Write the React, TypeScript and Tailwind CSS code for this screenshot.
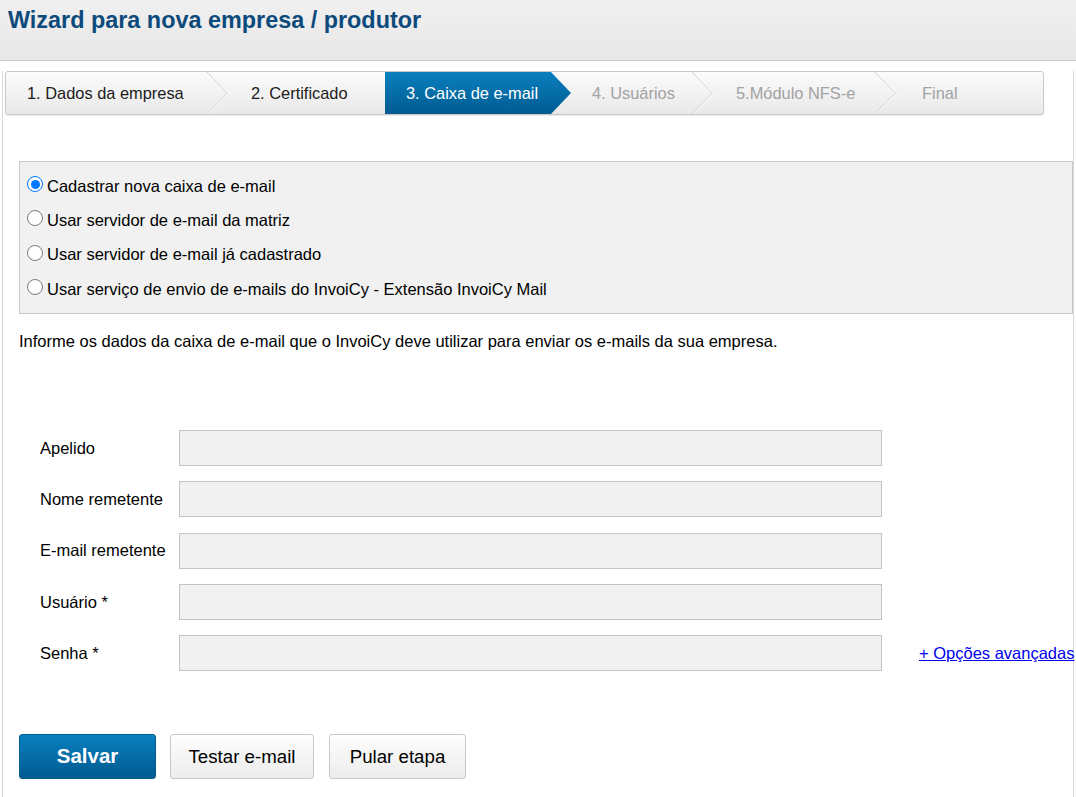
import React from "react";

type Step = { label: string; width: number; pl: number; state: "done" | "active" | "todo"; chevron: boolean };

const steps: Step[] = [
  { label: "1. Dados da empresa", width: 223, pl: 21, state: "done", chevron: true },
  { label: "2. Certificado", width: 156, pl: 22, state: "done", chevron: false },
  { label: "3. Caixa de e-mail", width: 186, pl: 21, state: "active", chevron: false },
  { label: "4. Usuários", width: 143, pl: 21, state: "todo", chevron: true },
  { label: "5.Módulo NFS-e", width: 183, pl: 22, state: "todo", chevron: true },
  { label: "Final", width: 146, pl: 25, state: "todo", chevron: false },
];

function Chevron() {
  return (
    <svg className="absolute right-0 top-0" width="23" height="42" viewBox="0 0 23 42">
      <polyline points="1,0 21.5,21 1,42" fill="none" stroke="#cfcfcf" strokeWidth="1" />
      <polyline points="2.2,0 22.7,21 2.2,42" fill="none" stroke="#ffffff" strokeWidth="1" />
    </svg>
  );
}

function Radio({ checked }: { checked: boolean }) {
  return checked ? (
    <span className="mb-[4px] w-[16px] h-[16px] rounded-full border-[1.5px] border-[#0075ff] bg-white flex items-center justify-center shrink-0">
      <span className="w-[9px] h-[9px] rounded-full bg-[#0075ff]" />
    </span>
  ) : (
    <span className="mb-[4px] w-[16px] h-[16px] rounded-full border border-[#7a7a7a] bg-white shrink-0" />
  );
}

const radios = [
  "Cadastrar nova caixa de e-mail",
  "Usar servidor de e-mail da matriz",
  "Usar servidor de e-mail já cadastrado",
  "Usar serviço de envio de e-mails do InvoiCy - Extensão InvoiCy Mail",
];

const fields = ["Apelido", "Nome remetente", "E-mail remetente", "Usuário *", "Senha *"];

export default function App() {
  return (
    <div className="w-[1076px] h-[797px] bg-white overflow-hidden font-['Liberation_Sans',Arial,sans-serif] text-black">
      <header className="h-[61px] border-b border-[#c9c9c9] bg-gradient-to-b from-[#f0f0f0] to-[#e7e7e7] pl-[8px] pt-[7px]">
        <h1 className="text-[23.4px] leading-[26px] font-bold text-[#0d4a7c]">Wizard para nova empresa / produtor</h1>
      </header>
      <div className="ml-[2px] w-[1072px] h-[735px] border-x border-b border-[#d8d8d8]">
        <div className="mt-[10px] ml-[2px] w-[1039px] h-[44px] border border-[#c8c8c8] rounded-[3px] bg-gradient-to-b from-[#fbfbfb] to-[#e9e9e9] flex shadow-[0_1px_1px_rgba(0,0,0,0.08)]">
          {steps.map((s) => (
            <div
              key={s.label}
              className={
                s.state === "active"
                  ? "relative h-full flex items-center text-[16.4px] text-white bg-gradient-to-b from-[#0a80bf] to-[#025b91] [clip-path:polygon(0_0,calc(100%-20px)_0,100%_50%,calc(100%-20px)_100%,0_100%)]"
                  : s.state === "done"
                  ? "relative h-full flex items-center text-[16.4px] text-[#1b1b1b]"
                  : "relative h-full flex items-center text-[16.4px] text-[#a2a2a2]"
              }
              style={{ width: s.width, paddingLeft: s.pl }}
            >
              <span className="whitespace-nowrap">{s.label}</span>
              {s.chevron && <Chevron />}
            </div>
          ))}
        </div>

        <div className="mt-[46px] ml-[16px] w-[1054px] h-[153px] border border-[#c8c8c8] bg-[#f1f1f1] pt-[7px] pl-[7px]">
          {radios.map((r, i) => (
            <label key={r} className="h-[34.3px] flex items-center gap-[4px] text-[16.5px] text-black">
              <Radio checked={i === 0} />
              <span className="whitespace-nowrap">{r}</span>
            </label>
          ))}
        </div>

        <p className="mt-[18px] ml-[16px] text-[16.5px] leading-[19px]">
          Informe os dados da caixa de e-mail que o InvoiCy deve utilizar para enviar os e-mails da sua empresa.
        </p>

        <div className="mt-[79px] ml-[37px] flex flex-col gap-[15.3px]">
          {fields.map((f, i) => (
            <div key={f} className="flex items-center h-[36px]">
              <span className="w-[139px] shrink-0 text-[16.5px]">{f}</span>
              <div className="w-[703px] shrink-0 h-[36px] border border-[#c4c4c4] bg-[#f1f1f1]" />
              {i === 4 && (
                <a href="#" className="ml-[37px] text-[16.5px] text-[#0000ee] underline whitespace-nowrap">
                  + Opções avançadas
                </a>
              )}
            </div>
          ))}
        </div>

        <div className="mt-[63px] ml-[16px] flex gap-[14px]">
          <button className="w-[137px] h-[45px] rounded-[3px] border border-[#035a8f] bg-gradient-to-b from-[#0a80bf] to-[#025b91] text-white font-bold text-[20.5px]">
            Salvar
          </button>
          <button className="w-[144px] h-[45px] rounded-[3px] border border-[#c8c8c8] bg-gradient-to-b from-[#fefefe] to-[#ececec] text-black text-[18.7px]">
            Testar e-mail
          </button>
          <button className="ml-[1px] w-[137px] h-[45px] rounded-[3px] border border-[#c8c8c8] bg-gradient-to-b from-[#fefefe] to-[#ececec] text-black text-[18.7px]">
            Pular etapa
          </button>
        </div>
      </div>
    </div>
  );
}
